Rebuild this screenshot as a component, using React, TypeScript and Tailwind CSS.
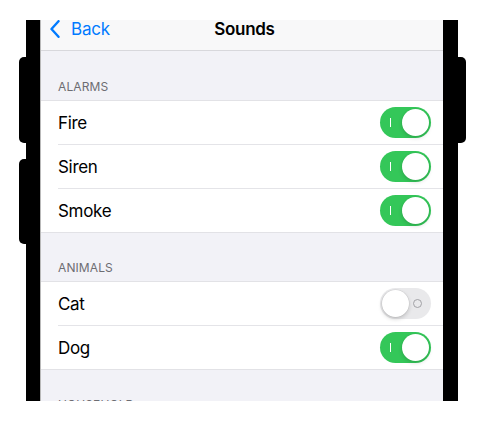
import React from "react";

type Item = { label: string; on: boolean };

const sections: { title: string; items: Item[] }[] = [
  {
    title: "Alarms",
    items: [
      { label: "Fire", on: true },
      { label: "Siren", on: true },
      { label: "Smoke", on: true },
    ],
  },
  {
    title: "Animals",
    items: [
      { label: "Cat", on: false },
      { label: "Dog", on: true },
    ],
  },
  // only the header peeks in at the bottom of the screen
  { title: "Household", items: [] },
];

function Toggle({ on }: { on: boolean }) {
  if (on) {
    return (
      <div className="relative flex h-[31px] w-[51px] shrink-0 items-center justify-end rounded-full bg-[#34c759] p-[2px]">
        <span className="absolute left-[10px] top-[11px] h-[9px] w-[1px] bg-white" />
        <span className="h-[27px] w-[27px] rounded-full bg-white shadow-[0_2px_4px_rgba(0,0,0,0.15),0_0_0_0.5px_rgba(0,0,0,0.04)]" />
      </div>
    );
  }
  return (
    <div className="relative flex h-[31px] w-[51px] shrink-0 items-center justify-start rounded-full bg-[#e9e9eb] p-[2px]">
      <span className="absolute right-[9px] top-[11px] h-[9px] w-[9px] rounded-full border border-[#a2a2a6]" />
      <span className="relative h-[27px] w-[27px] rounded-full bg-white shadow-[0_2px_4px_rgba(0,0,0,0.18),0_0_0_0.5px_rgba(0,0,0,0.08)]" />
    </div>
  );
}

function SideButton({ side, h, mt }: { side: "left" | "right"; h: string; mt: string }) {
  return (
    <div
      className={`${h} ${mt} w-full bg-black ${
        side === "left" ? "rounded-l-[5px]" : "rounded-r-[5px]"
      }`}
    />
  );
}

export default function App() {
  return (
    <div className="h-[422px] w-[486px] overflow-hidden bg-white pt-[20px] font-['Inter',sans-serif]">
      <div className="ml-[19px] flex h-[381px]">
        {/* left buttons */}
        <div className="flex w-[7px] flex-col">
          <SideButton side="left" h="h-[86px]" mt="mt-[37px]" />
          <SideButton side="left" h="h-[85px]" mt="mt-[16px]" />
        </div>

        {/* bezel */}
        <div className="w-[15px] border-r border-[#b9b9b9] bg-black" />

        {/* screen */}
        <div className="flex w-[402px] flex-col overflow-hidden bg-[#f2f2f7]">
          <div className="h-[31px] shrink-0 overflow-hidden border-b border-[#d8d8dc] bg-[#f8f8f9]">
            <div className="relative -mt-[13px] flex h-[44px] items-center px-[9px]">
              <div className="flex items-center gap-[11px] text-[#007aff]">
                <svg width="10" height="18" viewBox="0 0 10 18" fill="none">
                  <path
                    d="M8.5 1.2L1.5 9l7 7.8"
                    stroke="#007aff"
                    strokeWidth="2.4"
                    strokeLinecap="round"
                    strokeLinejoin="round"
                  />
                </svg>
                <span className="text-[17px] leading-[22px] tracking-[-0.2px]">Back</span>
              </div>
              <span className="absolute left-1/2 -translate-x-[46%] text-[17px] font-semibold leading-[22px] tracking-[-0.3px] text-black">
                Sounds
              </span>
            </div>
          </div>

          {sections.map((section, s) => (
            <div key={section.title} className="shrink-0">
              <div
                className={`flex items-end pb-[6px] pl-[17px] ${
                  s === 0 ? "h-[49px]" : "h-[48px]"
                }`}
              >
                <span className="text-[12px] uppercase leading-[15px] tracking-[0.1px] text-[#6d6d72]">
                  {section.title}
                </span>
              </div>
              {section.items.length > 0 && (
                <div className="border-y border-[#e2e2e6] bg-white">
                  {section.items.map((item, i) => (
                    <div key={item.label} className="pl-[17px]">
                      <div
                        className={`flex items-center justify-between pr-[12px] ${
                          i > 0 ? "h-[44px] border-t border-[#e4e4e8]" : "h-[43px]"
                        }`}
                      >
                        <span className="text-[17px] leading-[22px] tracking-[-0.3px] text-black">
                          {item.label}
                        </span>
                        <Toggle on={item.on} />
                      </div>
                    </div>
                  ))}
                </div>
              )}
            </div>
          ))}
        </div>

        {/* bezel */}
        <div className="w-[15px] bg-black" />

        {/* right button */}
        <div className="flex w-[8px] flex-col">
          <SideButton side="right" h="h-[86px]" mt="mt-[37px]" />
        </div>
      </div>
    </div>
  );
}
